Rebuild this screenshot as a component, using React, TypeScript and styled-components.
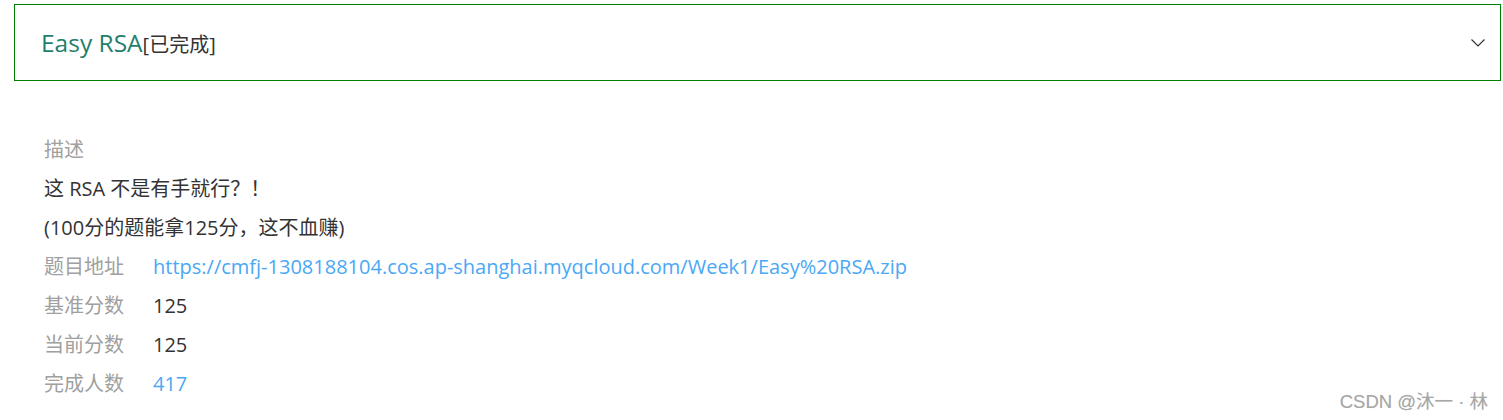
import React, { useState } from 'react';
import styled, { createGlobalStyle } from 'styled-components';

const GlobalStyle = createGlobalStyle`
    html, body {
        margin: 0;
        padding: 0;
        background: #ffffff;
    }
    body {
        font-family: "Open Sans", "Noto Sans CJK SC", sans-serif;
        font-size: 20px;
        color: #333333;
    }
`;

const Page = styled.div`
    position: relative;
    width: 1503px;
    height: 420px;
    padding: 4px 2px 0 14px;
    box-sizing: border-box;
    overflow: hidden;
`;

const Header = styled.div`
    display: flex;
    align-items: center;
    justify-content: space-between;
    height: 77px;
    box-sizing: border-box;
    border: 1px solid #008000;
    padding: 0 14px 0 26px;
    cursor: pointer;
`;

const Title = styled.div`
    display: flex;
    align-items: baseline;
`;

const Name = styled.span`
    font-size: 24.5px;
    color: #1f7f6c;
`;

const Status = styled.span`
    font-size: 20px;
    color: #333333;
`;

const Chevron = styled.svg<{ $open: boolean }>`
    width: 16px;
    height: 10px;
    transform: ${props => (props.$open ? 'none' : 'rotate(180deg)')};
`;

const Body = styled.div`
    padding: 49px 0 0 30px;
    line-height: 39px;
`;

const Heading = styled.div`
    color: #a0a0a0;
`;

const Line = styled.div`
    color: #333333;
`;

const Row = styled.div`
    display: grid;
    grid-template-columns: 109px 1fr;
`;

const Label = styled.span`
    color: #a0a0a0;
`;

const Value = styled.span<{ $link?: boolean }>`
    color: ${props => (props.$link ? '#4aa8f5' : '#333333')};
`;

const Watermark = styled.div`
    position: absolute;
    right: 15px;
    bottom: 7px;
    font-family: "Liberation Sans", "Noto Sans CJK SC", sans-serif;
    font-size: 18.5px;
    color: #a6a6a6;
    text-shadow: 0 0 1px #e0e0e0;
`;

const rows = [
    { label: '题目地址', value: 'https://cmfj-1308188104.cos.ap-shanghai.myqcloud.com/Week1/Easy%20RSA.zip', link: true },
    { label: '基准分数', value: '125' },
    { label: '当前分数', value: '125' },
    { label: '完成人数', value: '417', link: true },
];

const App: React.FC = () => {
    const [open, setOpen] = useState(true);

    return (
        <Page>
            <GlobalStyle />
            <Header onClick={() => setOpen(!open)}>
                <Title>
                    <Name>Easy RSA</Name>
                    <Status>[已完成]</Status>
                </Title>
                <Chevron $open={open} viewBox="0 0 16 10" fill="none">
                    <path d="M1.5 1.5 L8 8 L14.5 1.5" stroke="#333" strokeWidth="1.2" />
                </Chevron>
            </Header>
            {open && (
                <Body>
                    <Heading>描述</Heading>
                    <Line>这 RSA 不是有手就行？！</Line>
                    <Line>(100分的题能拿125分，这不血赚)</Line>
                    {rows.map(row => (
                        <Row key={row.label}>
                            <Label>{row.label}</Label>
                            <Value $link={row.link}>{row.value}</Value>
                        </Row>
                    ))}
                </Body>
            )}
            <Watermark>CSDN @沐一 · 林</Watermark>
        </Page>
    );
};

export default App;
